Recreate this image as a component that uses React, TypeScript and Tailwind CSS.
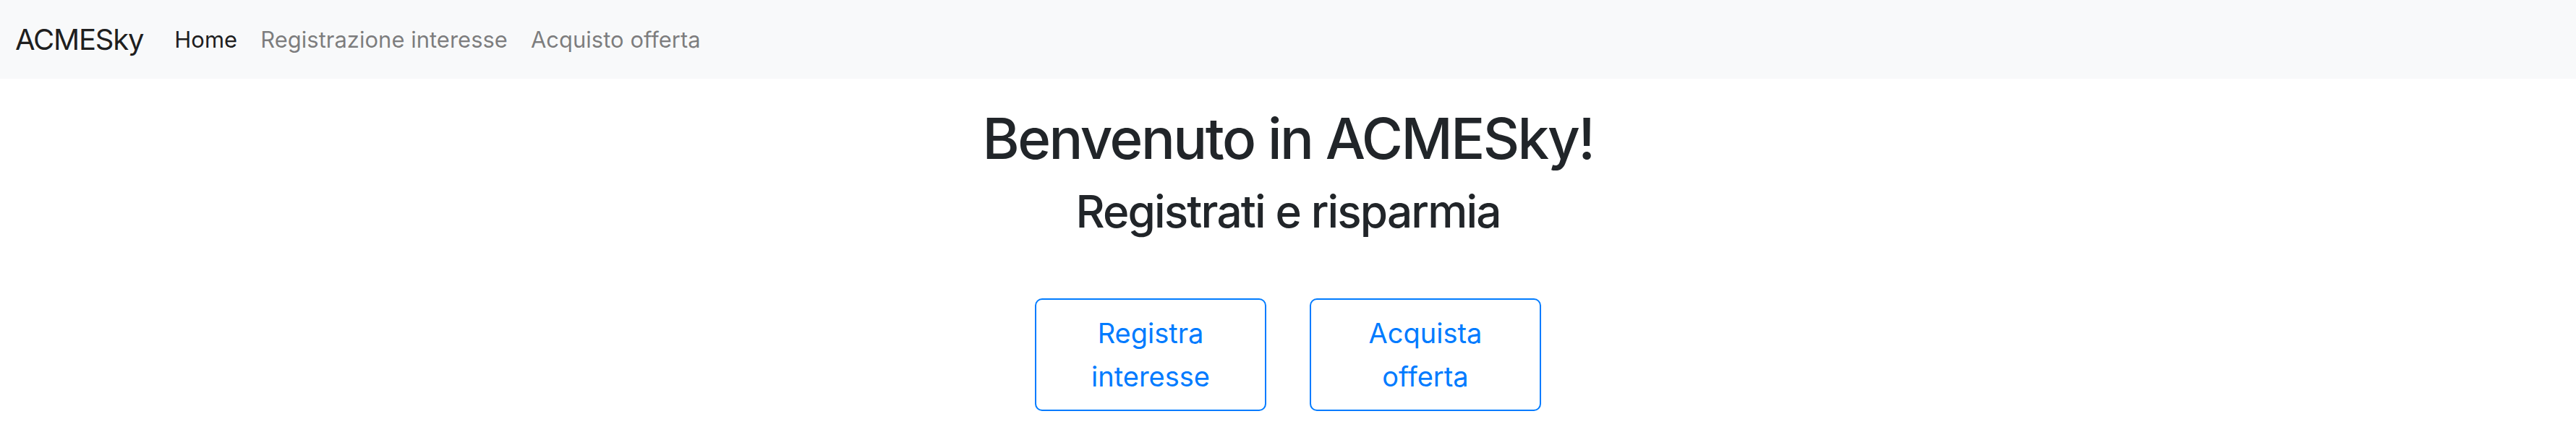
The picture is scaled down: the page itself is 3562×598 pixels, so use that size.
import React from "react";

export default function App() {
  const font = { fontFamily: "Inter, 'Noto Sans', sans-serif" };
  return (
    <div className="min-h-screen bg-white" style={font}>
      <nav className="flex h-[109px] items-center bg-[#f8f9fa] pl-[21px]">
        <a className="mr-[27px] text-[40px] leading-[60px] tracking-[-0.03em] text-[rgba(0,0,0,0.9)]">ACMESky</a>
        <ul className="flex items-center">
          <li>
            <a className="px-[16px] text-[31px] leading-[48px] text-[rgba(0,0,0,0.9)]">Home</a>
          </li>
          <li>
            <a className="px-[16px] text-[31px] leading-[48px] text-[rgba(0,0,0,0.5)]">Registrazione interesse</a>
          </li>
          <li>
            <a className="px-[16px] text-[31px] leading-[48px] text-[rgba(0,0,0,0.5)]">Acquisto offerta</a>
          </li>
        </ul>
      </nav>
      <main className="flex flex-col items-center text-[#212529]">
        <h1 className="mt-[35px] text-[78px] font-medium leading-[96px] tracking-[-0.032em]">Benvenuto in ACMESky!</h1>
        <h2 className="mt-[14px] text-[62px] font-medium leading-[77px] tracking-[-0.03em]">Registrati e risparmia</h2>
        <div className="mt-[82px] flex gap-[60px]">
          <button className="w-[320px] rounded-[10px] border-2 border-[#007bff] px-[32px] py-[16px] text-center text-[38px] leading-[60px] text-[#007bff]">
            Registra interesse
          </button>
          <button className="w-[320px] rounded-[10px] border-2 border-[#007bff] px-[32px] py-[16px] text-center text-[38px] leading-[60px] text-[#007bff]">
            Acquista offerta
          </button>
        </div>
      </main>
    </div>
  );
}
